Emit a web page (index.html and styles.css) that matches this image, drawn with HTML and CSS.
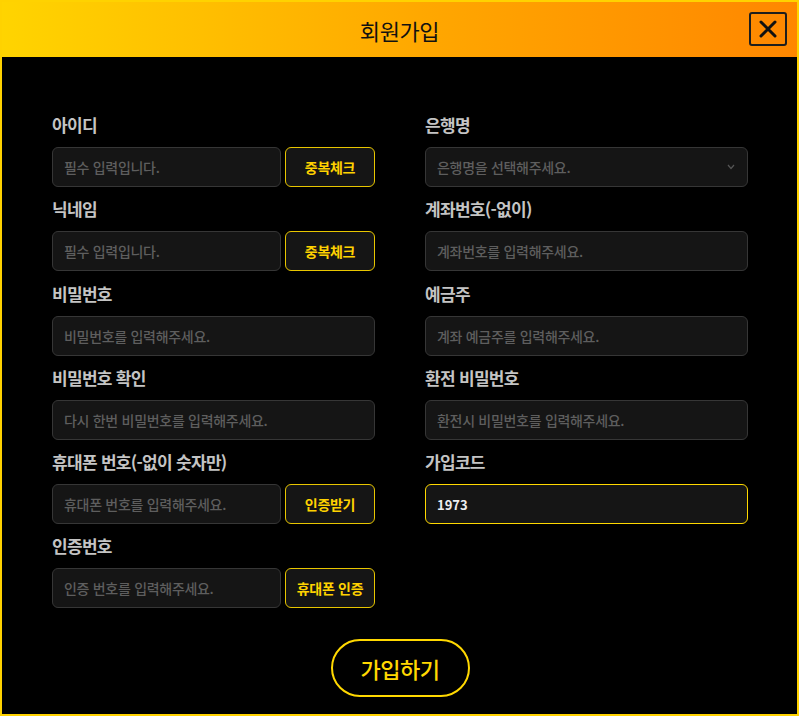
FILE: index.html
```html
<!DOCTYPE html>
<html lang="ko">
<head>
<meta charset="utf-8">
<title>회원가입</title>
<link rel="stylesheet" href="styles.css">
</head>
<body>
<div class="modal">
  <header class="modal-header">
    <h1 class="modal-title">회원가입</h1>
    <button class="close-btn" type="button" aria-label="닫기">
      <svg width="20" height="20" viewBox="0 0 20 20"><path d="M3 3 L17 17 M17 3 L3 17" stroke="#111" stroke-width="3" stroke-linecap="round"/></svg>
    </button>
  </header>
  <form class="modal-body">
    <div class="columns">
      <div class="column">
        <div class="field">
          <label class="label">아이디</label>
          <div class="row">
            <input class="input" type="text" placeholder="필수 입력입니다.">
            <button class="side-btn" type="button">중복체크</button>
          </div>
        </div>
        <div class="field">
          <label class="label">닉네임</label>
          <div class="row">
            <input class="input" type="text" placeholder="필수 입력입니다.">
            <button class="side-btn" type="button">중복체크</button>
          </div>
        </div>
        <div class="field">
          <label class="label">비밀번호</label>
          <input class="input" type="password" placeholder="비밀번호를 입력해주세요.">
        </div>
        <div class="field">
          <label class="label">비밀번호 확인</label>
          <input class="input" type="password" placeholder="다시 한번 비밀번호를 입력해주세요.">
        </div>
        <div class="field">
          <label class="label">휴대폰 번호(-없이 숫자만)</label>
          <div class="row">
            <input class="input" type="text" placeholder="휴대폰 번호를 입력해주세요.">
            <button class="side-btn" type="button">인증받기</button>
          </div>
        </div>
        <div class="field">
          <label class="label">인증번호</label>
          <div class="row">
            <input class="input" type="text" placeholder="인증 번호를 입력해주세요.">
            <button class="side-btn" type="button">휴대폰 인증</button>
          </div>
        </div>
      </div>
      <div class="column">
        <div class="field">
          <label class="label">은행명</label>
          <div class="select">
            <span class="select-text">은행명을 선택해주세요.</span>
            <svg class="chevron" width="8" height="6" viewBox="0 0 8 6"><path d="M1 1 L4 4.5 L7 1" fill="none" stroke="#555" stroke-width="1.2"/></svg>
          </div>
        </div>
        <div class="field">
          <label class="label">계좌번호(-없이)</label>
          <input class="input" type="text" placeholder="계좌번호를 입력해주세요.">
        </div>
        <div class="field">
          <label class="label">예금주</label>
          <input class="input" type="text" placeholder="계좌 예금주를 입력해주세요.">
        </div>
        <div class="field">
          <label class="label">환전 비밀번호</label>
          <input class="input" type="password" placeholder="환전시 비밀번호를 입력해주세요.">
        </div>
        <div class="field">
          <label class="label">가입코드</label>
          <input class="input input-active" type="text" value="1973">
        </div>
      </div>
    </div>
    <div class="submit-wrap">
      <button class="submit-btn" type="button">가입하기</button>
    </div>
  </form>
</div>
</body>
</html>
```
FILE: styles.css
```css
* { box-sizing: border-box; }
html, body { margin: 0; padding: 0; background: #000; }
body {
  font-family: "Noto Sans CJK KR", "Noto Sans", sans-serif;
  width: 799px;
  height: 716px;
  overflow: hidden;
}
.modal {
  width: 799px;
  height: 716px;
  border: 2px solid #ffd200;
  background: #000;
  display: flex;
  flex-direction: column;
}
.modal-header {
  height: 55px;
  flex: none;
  background: linear-gradient(90deg, #ffd400 0%, #ffa600 55%, #ff8700 100%);
  display: flex;
  align-items: center;
  justify-content: center;
  position: relative;
}
.modal-title {
  margin: 0;
  font-size: 22px;
  font-weight: 400;
  color: #111;
  letter-spacing: -0.4px;
}
.close-btn {
  position: absolute;
  right: 10px;
  top: 10px;
  width: 38px;
  height: 34px;
  border: 2px solid #1e1e1e;
  border-radius: 3px;
  background: transparent;
  padding: 0;
  display: flex;
  align-items: center;
  justify-content: center;
}
.modal-body {
  flex: 1;
  margin: 0;
  padding: 57px 49px 0 50px;
  display: flex;
  flex-direction: column;
}
.columns {
  display: grid;
  grid-template-columns: 323px 323px;
  column-gap: 50px;
}
.column {
  display: flex;
  flex-direction: column;
}
.field {
  display: flex;
  flex-direction: column;
  gap: 11px;
  margin-bottom: 11.3px;
}
.label {
  font-size: 17px;
  line-height: 22px;
  font-weight: 700;
  color: #c4c4c4;
  letter-spacing: -0.7px;
}
.row {
  display: flex;
  gap: 4px;
}
.input, .select {
  height: 40px;
  width: 100%;
  background: #151515;
  border: 1px solid #363636;
  border-radius: 6px;
  padding: 0 11px;
  font-family: inherit;
  font-size: 14px;
  color: #e6e6e6;
  outline: none;
}
.row .input { width: 229px; flex: none; }
.input::placeholder { color: #5e5e5e; letter-spacing: -0.3px; font-weight: 500; }
.input-active {
  border-color: #ffd800;
  font-weight: 700;
  font-size: 13px;
  color: #eee;
}
.select {
  display: flex;
  align-items: center;
  justify-content: space-between;
  padding-right: 12px;
}
.select-text { color: #5e5e5e; letter-spacing: -0.3px; font-weight: 500; }
.side-btn {
  width: 90px;
  height: 40px;
  flex: none;
  background: #151515;
  border: 1px solid #e8c600;
  border-radius: 6px;
  color: #ffd200;
  font-family: inherit;
  font-size: 14px;
  font-weight: 700;
  padding: 0;
  letter-spacing: -0.3px;
}
.submit-wrap {
  display: flex;
  justify-content: center;
  margin-top: 19px;
}
.submit-btn {
  width: 139px;
  height: 58px;
  border: 2px solid #ffd800;
  border-radius: 30px;
  background: #000;
  color: #ffd800;
  font-family: inherit;
  font-size: 22px;
  font-weight: 500;
  letter-spacing: -0.5px;
}
```
